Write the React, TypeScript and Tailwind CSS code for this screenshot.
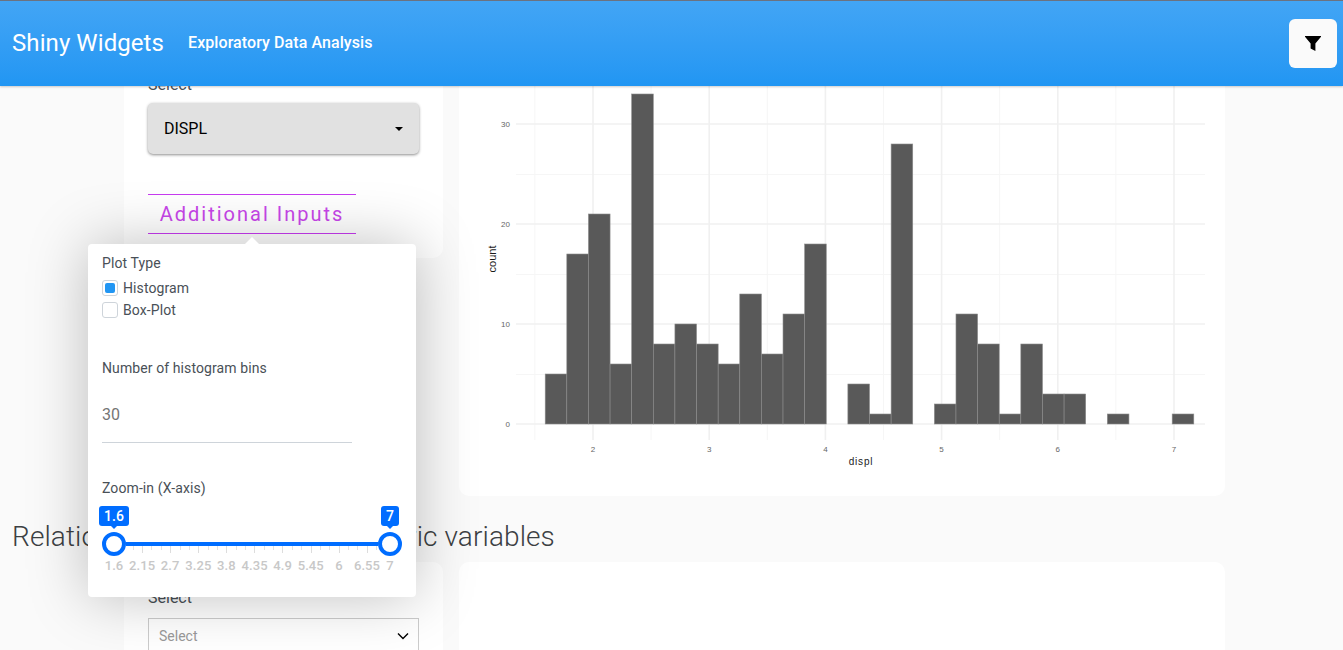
const counts = [5, 17, 21, 6, 33, 8, 10, 8, 6, 13, 7, 11, 18, 0, 4, 1, 28, 0, 2, 11, 8, 1, 8, 3, 3, 0, 1, 0, 0, 1];
const sliderLabels = [1.6, 2.15, 2.7, 3.25, 3.8, 4.35, 4.9, 5.45, 6, 6.55, 7];
const sliderTicks = Array.from({ length: 30 }, (_, i) => 1.6 + (i * 0.55) / 3).filter((v) => v < 6.99);

// x position of a displ value, y position of a count, in page pixels
const xOf = (v: number) => 593 + (v - 2) * 116.2;
const yOf = (c: number) => 424 - c * 10;
// px the slider track covers between two values
const sliderGap = (a: number, b: number) => ((b - a) / 5.4) * 276;

function Histogram() {
  const majorX = [2, 3, 4, 5, 6, 7];
  const minorX = [1.5, 2.5, 3.5, 4.5, 5.5, 6.5];
  return (
    <svg viewBox="459 66 766 430" className="block h-[430px] w-[766px]">
      {[5, 15, 25, 35].map((c) => (
        <line key={c} x1="516" x2="1205" y1={yOf(c) + 0.5} y2={yOf(c) + 0.5} stroke="#f6f6f6" />
      ))}
      {minorX.map((v) => (
        <line key={v} x1={xOf(v)} x2={xOf(v)} y1="66" y2="440" stroke="#f6f6f6" />
      ))}
      {[0, 10, 20, 30].map((c) => (
        <line key={c} x1="516" x2="1205" y1={yOf(c)} y2={yOf(c)} stroke="#f0f0f0" strokeWidth="1.6" />
      ))}
      {majorX.map((v) => (
        <line key={v} x1={xOf(v)} x2={xOf(v)} y1="66" y2="440" stroke="#f0f0f0" strokeWidth="1.6" />
      ))}
      {counts.map((c, i) =>
        c === 0 ? null : (
          <rect
            key={i}
            x={545.2 + i * 21.62}
            y={yOf(c)}
            width="21.62"
            height={c * 10}
            fill="#595959"
            stroke="#8c8c8c"
            strokeWidth="0.6"
          />
        ),
      )}
      <g fontFamily="Liberation Sans, sans-serif" fontSize="8" fill="#666666">
        {[0, 10, 20, 30].map((c) => (
          <text key={c} x="510" y={yOf(c) + 3} textAnchor="end">
            {c}
          </text>
        ))}
        {majorX.map((v) => (
          <text key={v} x={xOf(v)} y="452" textAnchor="middle">
            {v}
          </text>
        ))}
      </g>
      <g fontFamily="Liberation Sans, sans-serif" fill="#1a1a1a">
        <text x="861" y="465" textAnchor="middle" fontSize="10" letterSpacing="0.8">
          displ
        </text>
        <text x="496" y="259" textAnchor="middle" fontSize="11" transform="rotate(-90 496 259)">
          count
        </text>
      </g>
    </svg>
  );
}

function Bubble({ text }: { text: string }) {
  return (
    <span className="relative rounded-[3px] bg-[#006dff] px-[5px] text-[14px] font-medium leading-[20px] text-white">
      {text}
      <span className="absolute -bottom-[3px] left-1/2 -ml-[3px] h-0 w-0 border-x-[3px] border-t-[3px] border-x-transparent border-t-[#006dff]" />
    </span>
  );
}

function RangeSlider() {
  return (
    <div className="w-[300px] pt-[9px]">
      <div className="-ml-[3px] flex w-[300px] justify-between">
        <Bubble text="1.6" />
        <Bubble text="7" />
      </div>
      <div className="relative z-10 mt-[6px] flex items-center">
        <span className="h-[24px] w-[24px] rounded-full border-[4px] border-[#006dff] bg-white" />
        <span className="h-[4px] flex-1 bg-[#006dff]" />
        <span className="h-[24px] w-[24px] rounded-full border-[4px] border-[#006dff] bg-white" />
      </div>
      <div className="-mt-[10px] ml-[12px] flex h-[10px] items-start">
        {sliderTicks.map((v, i) => (
          <span
            key={i}
            className={i % 3 === 0 ? "h-[7px] border-l border-[#dddddd]" : "h-[4px] border-l border-[#e2e2e2]"}
            style={{ width: sliderGap(v, sliderTicks[i + 1] ?? 7) }}
          />
        ))}
        <span className="h-[7px] border-l border-[#dddddd]" />
      </div>
      <div className="ml-[12px] mt-[1px] flex text-[13px] font-medium leading-[18px] text-[#c8c8c8]">
        {sliderLabels.map((v, i) => (
          <span key={v} style={{ width: sliderGap(v, sliderLabels[i + 1] ?? v) }}>
            <span className="inline-block -translate-x-1/2 whitespace-nowrap">{v}</span>
          </span>
        ))}
      </div>
    </div>
  );
}

function PlotPopover() {
  return (
    <div className="absolute left-[88px] top-[244px] z-20 h-[353px] w-[328px] rounded bg-white px-[14px] pt-[10px] text-[14px] tracking-[0.1px] text-[#495057] shadow-[0_0_60px_rgba(0,0,0,0.25)]">
      <div className="absolute -top-[7px] left-[157px] h-0 w-0 border-x-[7px] border-b-[7px] border-x-transparent border-b-white" />
      <div className="leading-[18px]">Plot Type</div>
      <div className="mt-[5px] flex h-[22px] items-center gap-[5px]">
        <span className="flex h-[16px] w-[16px] items-center justify-center rounded-[3px] border border-[#ced4da]">
          <span className="h-[10px] w-[10px] rounded-[2px] bg-[#2196f3]" />
        </span>
        Histogram
      </div>
      <div className="flex h-[22px] items-center gap-[5px]">
        <span className="h-[16px] w-[16px] rounded-[3px] border border-[#ced4da]" />
        Box-Plot
      </div>
      <div className="mt-[38px] leading-[18px]">Number of histogram bins</div>
      <div className="mt-[15px] h-[51px] w-[250px] border-b border-[#ced4da] pt-[11px] text-[16px] leading-[24px] text-[#757575]">30</div>
      <div className="mt-[36px] leading-[18px]">Zoom-in (X-axis)</div>
      <RangeSlider />
    </div>
  );
}

export default function App() {
  return (
    <div className="relative h-screen overflow-hidden bg-[#fafafa] font-['Roboto',sans-serif]">
      <header className="relative z-10 flex h-[86px] items-center border-t border-[#6b7280] bg-gradient-to-b from-[#42a5f5] to-[#2196f3] pl-[12px] pr-[6px] text-white shadow-[0_1px_2px_rgba(0,0,0,0.2)]">
        <div className="mb-[2px] text-[24px] leading-[30px] tracking-[0.08px]">Shiny Widgets</div>
        <div className="mb-[2px] ml-[24px] text-[16px] font-medium tracking-[0.08px]">Exploratory Data Analysis</div>
        <button className="ml-auto flex h-[49px] w-[48px] items-center justify-center rounded-[6px] bg-[#fafafa] text-black">
          <svg viewBox="0 0 16 15" className="h-[15px] w-[16px]" fill="currentColor">
            <path d="M0 0h16v0.8L10.4 7.4V15L5.6 12.6V7.4L0 0.8z" />
          </svg>
        </button>
      </header>

      <main className="-mt-[20px]">
        <div className="ml-[124px] flex gap-[16px]">
          <section className="h-[192px] w-[319px] shrink-0 rounded-[10px] bg-white px-[24px] pt-[9px]">
            <div className="text-[16px] leading-[20px] text-[#495057]">Select</div>
            <div className="mt-[8px] flex h-[51px] w-[271px] items-center justify-between rounded-[5px] bg-[#e1e1e1] px-[16px] text-[16px] text-black shadow-[0_1px_3px_rgba(0,0,0,0.45)]">
              DISPL
              <span className="h-0 w-0 border-x-[4px] border-t-[4px] border-x-transparent border-t-black" />
            </div>
            <div className="mt-[40px] flex h-[40px] w-[208px] items-center justify-center border-y border-[#c73bf0] text-[20px] leading-[24px] tracking-[2px] text-[#c846ea]">
              Additional Inputs
            </div>
          </section>
          <section className="h-[430px] w-[766px] shrink-0 rounded-[10px] bg-white">
            <Histogram />
          </section>
        </div>
        <h2 className="mt-[23px] pl-[12px] text-[28px] font-light leading-[36px] tracking-[0.1px] text-[#3c4043]">Relationship between two numeric variables</h2>
        <div className="ml-[124px] mt-[7px] flex gap-[16px]">
          <section className="h-[200px] w-[319px] shrink-0 rounded-[10px] bg-white px-[24px] pt-[26px]">
            <div className="text-[16px] leading-[20px] text-[#495057]">Select</div>
            <div className="mt-[10px] flex h-[38px] w-[271px] items-center justify-between border border-[#cccccc] pb-[2px] pl-[10px] pr-[9px] text-[14px] text-[#999999]">
              Select
              <svg viewBox="0 0 12 12" className="h-[12px] w-[12px] text-black" fill="none" stroke="currentColor" strokeWidth="1.4">
                <path d="M1 3.5l5 5 5-5" />
              </svg>
            </div>
          </section>
          <section className="h-[200px] w-[766px] shrink-0 rounded-[10px] bg-white" />
        </div>
      </main>

      <PlotPopover />
    </div>
  );
}
